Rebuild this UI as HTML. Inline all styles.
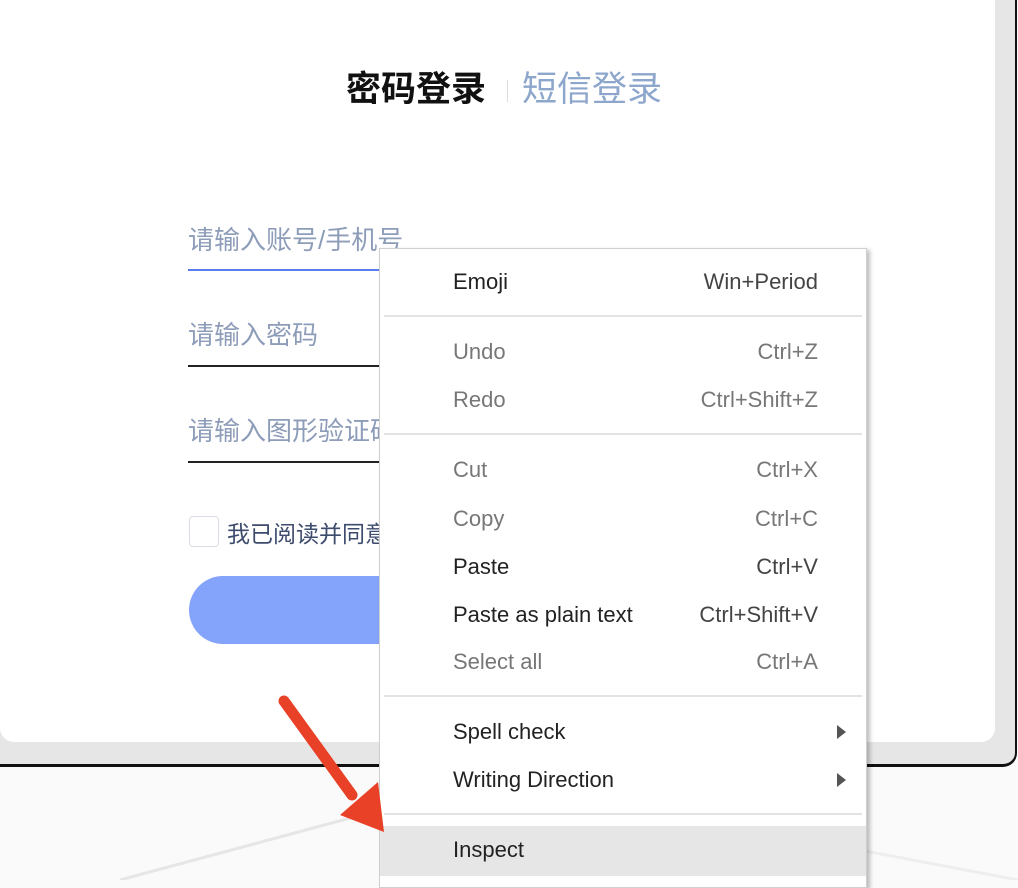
<!DOCTYPE html>
<html><head><meta charset="utf-8"><style>
*{margin:0;padding:0;box-sizing:border-box}
body{width:1018px;height:880px;overflow:hidden;background:#fafafa;position:relative;font-family:"Liberation Sans","Noto Sans CJK SC",sans-serif}
.outer{position:absolute;left:-20px;top:-20px;width:1037px;height:787px;background:#e6e6e6;border-right:2px solid #111;border-bottom:3px solid #111;border-radius:0 0 14px 14px}
.card{position:absolute;left:0;top:0;width:995px;height:742px;background:#fff;border-radius:0 0 14px 14px}
.t{position:absolute;white-space:nowrap}
.menu{position:absolute;left:379px;top:248px;width:488px;height:640px;background:#fff;border:1px solid #cfcfcf;box-shadow:3px 2px 4px rgba(0,0,0,.25)}
.it{position:absolute;left:0;width:486px;height:48px;font-size:22px;line-height:48px;color:#222}
.it .l{position:absolute;left:73px}
.it .r{position:absolute;right:48px;color:#444}
.dis .l,.dis .r{color:#777}
.sep{position:absolute;left:4px;right:4px;height:2px;background:#e3e3e3}
.arr{position:absolute;right:20px;top:17px;width:0;height:0;border-left:9px solid #555;border-top:7px solid transparent;border-bottom:7px solid transparent}
</style></head><body>
<div class="outer"></div>
<div class="card"></div>
<svg style="position:absolute;left:0;top:770px" width="1018" height="110"><line x1="120" y1="110" x2="380" y2="40" stroke="#e6e6e6" stroke-width="3"/><line x1="860" y1="80" x2="1018" y2="110" stroke="#eee" stroke-width="3"/></svg>
<div class="t" style="left:346px;top:68px;font-size:35px;font-weight:bold;color:#111;line-height:44px">密码登录</div>
<div style="position:absolute;left:507px;top:80px;width:1px;height:22px;background:#ddd"></div>
<div class="t" style="left:522px;top:68px;font-size:35px;color:#8da6cc;line-height:44px">短信登录</div>
<div class="t" style="left:188px;top:220px;font-size:26px;color:#8d9cb8">请输入账号/手机号</div>
<div style="position:absolute;left:188px;top:269px;width:200px;height:2px;background:#5a7ef0"></div>
<div class="t" style="left:188px;top:315px;font-size:26px;color:#8d9cb8">请输入密码</div>
<div style="position:absolute;left:188px;top:365px;width:200px;height:2px;background:#222"></div>
<div class="t" style="left:188px;top:411px;font-size:26px;color:#8d9cb8">请输入图形验证码</div>
<div style="position:absolute;left:188px;top:461px;width:200px;height:2px;background:#222"></div>
<div style="position:absolute;left:189px;top:516px;width:30px;height:31px;border:1.5px solid #d8dde6;border-radius:4px;background:#fff"></div>
<div class="t" style="left:227px;top:515px;font-size:23px;color:#3d4b6d">我已阅读并同意</div>
<div style="position:absolute;left:189px;top:576px;width:260px;height:68px;background:#84a3fb;border-radius:34px"></div>
<div class="menu">
<div class="it" style="top:9px"><span class="l">Emoji</span><span class="r">Win+Period</span></div>
<div class="sep" style="top:66px"></div>
<div class="it dis" style="top:79px"><span class="l">Undo</span><span class="r">Ctrl+Z</span></div>
<div class="it dis" style="top:127px"><span class="l">Redo</span><span class="r">Ctrl+Shift+Z</span></div>
<div class="sep" style="top:184px"></div>
<div class="it dis" style="top:197px"><span class="l">Cut</span><span class="r">Ctrl+X</span></div>
<div class="it dis" style="top:246px"><span class="l">Copy</span><span class="r">Ctrl+C</span></div>
<div class="it" style="top:294px"><span class="l">Paste</span><span class="r">Ctrl+V</span></div>
<div class="it" style="top:342px"><span class="l">Paste as plain text</span><span class="r">Ctrl+Shift+V</span></div>
<div class="it dis" style="top:389px"><span class="l">Select all</span><span class="r">Ctrl+A</span></div>
<div class="sep" style="top:446px"></div>
<div class="it" style="top:459px"><span class="l">Spell check</span><span class="arr"></span></div>
<div class="it" style="top:507px"><span class="l">Writing Direction</span><span class="arr"></span></div>
<div class="sep" style="top:564px"></div>
<div class="it" style="top:577px;height:50px;background:#e6e6e6"><span class="l">Inspect</span></div>
</div>
<svg style="position:absolute;left:0;top:0" width="1018" height="880"><line x1="284" y1="701" x2="352" y2="795" stroke="#e84127" stroke-width="11" stroke-linecap="round"/><polygon points="340,815 384,832 378,782" fill="#e84127"/></svg>
</body></html>
